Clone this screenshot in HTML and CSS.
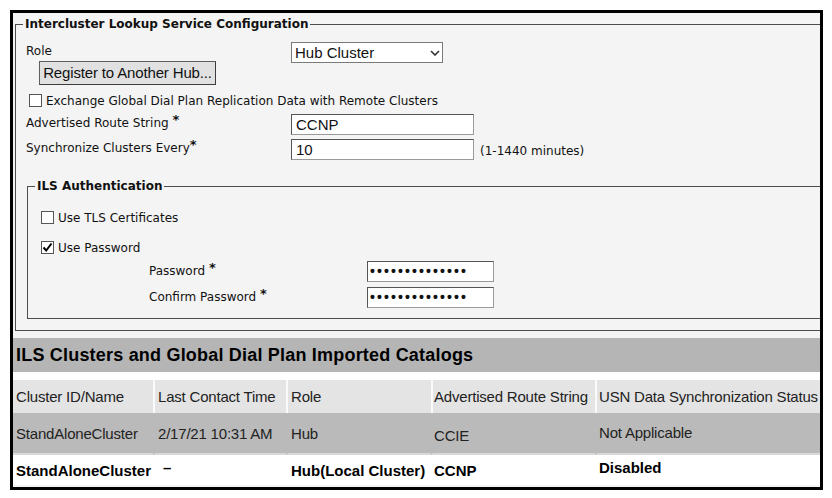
FILE: index.html
```html
<!DOCTYPE html>
<html lang="en">
<head>
    <meta charset="UTF-8">
    <title>Intercluster Lookup Service</title>
    <link rel="stylesheet" href="styles.css">
</head>
<body>
<div class="frame">
    <fieldset class="box ils-config">
        <legend>Intercluster Lookup Service Configuration</legend>
        <div class="row role-row">
            <label class="lbl">Role</label>
            <div class="select">
                <span>Hub Cluster</span>
                <svg width="10" height="6" viewBox="0 0 10 6"><path d="M1 1 L5 5 L9 1" fill="none" stroke="#333" stroke-width="1.6"/></svg>
            </div>
        </div>
        <div class="btn">Register to Another Hub...</div>
        <div class="check-row exchange">
            <span class="chk"></span>
            <span>Exchange Global Dial Plan Replication Data with Remote Clusters</span>
        </div>
        <div class="row route-row">
            <label class="lbl">Advertised Route String <b class="req">*</b></label>
            <div class="input">CCNP</div>
        </div>
        <div class="row sync-row">
            <label class="lbl">Synchronize Clusters Every<b class="req">*</b></label>
            <div class="input">10</div>
            <span class="hint">(1-1440 minutes)</span>
        </div>
        <fieldset class="box ils-auth">
            <legend>ILS Authentication</legend>
            <div class="check-row tls">
                <span class="chk"></span>
                <span>Use TLS Certificates</span>
            </div>
            <div class="check-row pwd">
                <span class="chk"><svg width="11" height="11" viewBox="0 0 11 11"><path d="M1.5 5.5 L4.2 8.5 L9.5 1.5" fill="none" stroke="#000" stroke-width="2"/></svg></span>
                <span>Use Password</span>
            </div>
            <div class="row pass-row">
                <label class="lbl">Password <b class="req">*</b></label>
                <div class="input pass">&bull;&bull;&bull;&bull;&bull;&bull;&bull;&bull;&bull;&bull;&bull;&bull;&bull;&bull;</div>
            </div>
            <div class="row pass-row confirm">
                <label class="lbl">Confirm Password <b class="req">*</b></label>
                <div class="input pass">&bull;&bull;&bull;&bull;&bull;&bull;&bull;&bull;&bull;&bull;&bull;&bull;&bull;&bull;</div>
            </div>
        </fieldset>
    </fieldset>

    <div class="catalog">
        <div class="catalog-title">ILS Clusters and Global Dial Plan Imported Catalogs</div>
        <table>
            <colgroup>
                <col class="w1"><col class="w2"><col class="w3"><col class="w4"><col>
            </colgroup>
            <tr class="head">
                <th>Cluster ID/Name</th>
                <th>Last Contact Time</th>
                <th>Role</th>
                <th class="c4">Advertised Route String</th>
                <th class="c5">USN Data Synchronization Status</th>
            </tr>
            <tr class="remote">
                <td>StandAloneCluster</td>
                <td>2/17/21 10:31 AM</td>
                <td>Hub</td>
                <td class="c4 low">CCIE</td>
                <td class="c5 high">Not Applicable</td>
            </tr>
            <tr class="local">
                <td>StandAloneCluster</td>
                <td class="dash"><span>&ndash;</span></td>
                <td>Hub(Local Cluster)</td>
                <td class="c4">CCNP</td>
                <td class="c5 high">Disabled</td>
            </tr>
        </table>
    </div>
</div>
</body>
</html>
```

FILE: styles.css
```css
*{
    margin: 0;
    padding: 0;
    box-sizing: border-box;
}
body{
    background: #fff;
    color: #111;
    font-family: "DejaVu Sans", sans-serif;
    font-size: 12px;
}
.frame{
    width: 813px;
    height: 480px;
    margin: 10px 0 0 10px;
    border: 3px solid #000;
    background: #f4f4f4;
    overflow: hidden;
}

/* fieldsets */
.box{
    border: 1px solid #4d4d4d;
    min-width: 0;
}
.box legend{
    font-weight: bold;
    line-height: 16px;
    padding: 0 2px;
}
.ils-config{
    margin: 3px -20px 0 2px;
    padding: 0 0 11px 10px;
}
.ils-config > legend{
    margin-left: -3px;
}
.ils-auth{
    margin: 18px 0 0 1px;
    padding: 0 0 10px 7px;
}

/* rows */
.row{
    display: flex;
    align-items: flex-start;
}
.lbl{
    width: 265px;
    line-height: 16px;
    padding-top: 1px;
}
.req{
    font-size: 13px;
    line-height: 0;
    vertical-align: 3px;
}
.role-row{
    margin-top: 10px;
}
.route-row{
    margin-top: 7px;
}
.sync-row{
    margin-top: 4px;
}
.hint{
    align-self: center;
    margin: 3px 0 0 6px;
}

.select{
    width: 152px;
    height: 21px;
    background: #fff;
    border: 1px solid #7a7a7a;
    display: flex;
    align-items: center;
    justify-content: space-between;
    padding: 0 2px 0 3px;
    font-family: "Liberation Sans", Arial, sans-serif;
    font-size: 15px;
}
.select svg{
    margin-top: 1px;
}
.btn{
    width: 177px;
    height: 24px;
    margin: -2px 0 0 13px;
    background: #e1e1e1;
    border: 1px solid #5e5e5e;
    border-right-color: #3c3c3c;
    border-bottom-color: #3c3c3c;
    font-family: "Liberation Sans", Arial, sans-serif;
    font-size: 15px;
    letter-spacing: -0.15px;
    line-height: 22px;
    text-align: center;
}
.input{
    width: 183px;
    height: 21px;
    background: #fff;
    border: 1px solid #9a9a9a;
    border-top-color: #555;
    border-left-color: #555;
    padding-left: 4px;
    font-family: "Liberation Sans", Arial, sans-serif;
    font-size: 15px;
    line-height: 19px;
}
.input.pass{
    width: 127px;
    font-size: 14px;
    font-weight: bold;
    letter-spacing: 2.1px;
    padding-left: 2px;
}

/* checkboxes */
.check-row{
    display: flex;
    align-items: center;
    height: 13px;
    gap: 4px;
}
.chk{
    width: 13px;
    height: 13px;
    background: #fff;
    border: 1px solid #555;
    display: flex;
    align-items: center;
    justify-content: center;
}
.exchange{
    margin: 9px 0 0 3px;
}
.tls{
    margin: 17px 0 0 6px;
}
.pwd{
    margin: 17px 0 0 6px;
}
.pass-row{
    margin: 7px 0 0 114px;
}
.pass-row .lbl{
    width: 218px;
    padding-top: 2px;
}
.pass-row.confirm{
    margin-top: 5px;
}

/* catalog table */
.catalog{
    margin-top: 7px;
    background: #fff;
    font-family: "Liberation Sans", Arial, sans-serif;
    font-size: 15px;
}
.catalog-title{
    height: 34px;
    line-height: 34px;
    background: #b5b5b5;
    padding-left: 3px;
    font-size: 18px;
    font-weight: bold;
    letter-spacing: 0.2px;
    color: #000;
}
table{
    margin-top: 8px;
    width: 812px;
    border-spacing: 0;
    table-layout: fixed;
}
.w1{ width: 140px; }
.w2{ width: 133px; }
.w3{ width: 145px; }
.w4{ width: 164px; }
th, td{
    text-align: left;
    font-weight: normal;
    white-space: nowrap;
    padding-left: 3px;
    letter-spacing: -0.2px;
    vertical-align: middle;
}
th + th, td + td{
    border-left: 2px solid transparent;
}
th.c4, td.c4{
    padding-left: 1px;
}
th.c5, td.c5{
    padding-left: 2px;
}
.head th{
    height: 33px;
    background: #e4e4e4;
    color: #222;
}
.head th + th{
    border-left-color: #fafafa;
}
.remote td{
    height: 42px;
    background: #bababa;
    border-bottom: 2px solid #d8d8d8;
    color: #222;
}
.remote .low{
    padding-top: 4px;
}
.remote .high{
    padding-bottom: 2px;
}
.local td{
    height: 30px;
    font-weight: bold;
    letter-spacing: 0;
    color: #000;
}
.local .high{
    padding-bottom: 5px;
}
.dash span{
    display: inline-block;
    margin-left: 5px;
    vertical-align: 5px;
}
```
